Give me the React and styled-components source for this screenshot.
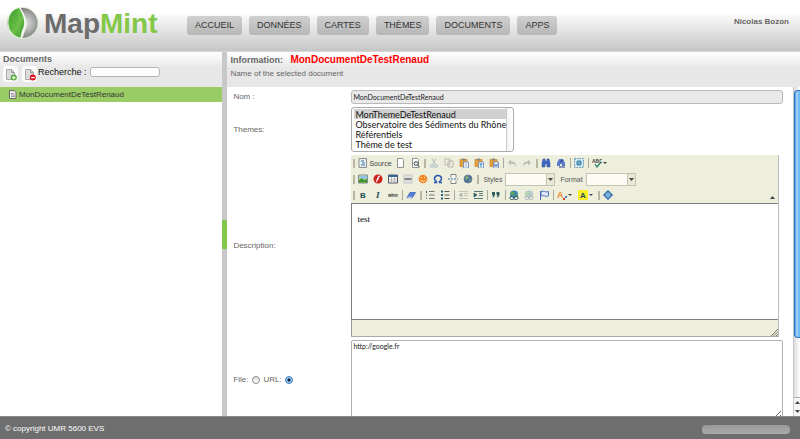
import React from "react";
import styled, { createGlobalStyle } from "styled-components";

const Global = createGlobalStyle`
  * { box-sizing: border-box; }
  body { margin: 0; font-family: "Liberation Sans", Arial, sans-serif; font-size: 8px; color: #666; background: #fff; }
  button, input, select, textarea { font-family: inherit; margin: 0; }
`;

const uiFont = `Lato, "Open Sans", sans-serif`;

const Page = styled.div`
  display: flex;
  flex-direction: column;
  height: 100vh;
  overflow: hidden;
`;
const Header = styled.header`
  display: flex;
  flex: none;
  align-items: flex-start;
  height: 52px;
  padding: 0 11px 0 6px;
  border-bottom: 1px solid #d6d6d6;
  background: linear-gradient(#fff 12px, #f2f2f2 20px, #c6c6c6);
`;
const Brand = styled.h1`
  display: flex;
  align-items: flex-start;
  gap: 5px;
  width: 181px;
  margin: 0;
  padding-top: 6px;
  font-size: 28px;
  line-height: 36px;
  color: #6c6c6c;
  svg { flex: none; }
`;
const Mint = styled.span`
  color: #84c84a;
`;
const Nav = styled.nav`
  display: flex;
  gap: 7px;
  flex: 1;
  padding-top: 16px;
`;
const NavButton = styled.button`
  height: 19px;
  padding: 0 8px;
  border: 0;
  border-radius: 3px;
  background: linear-gradient(#d0d0d0, #b6b6b6);
  color: #333;
  font-size: 9px;
  line-height: 19px;
`;
const User = styled.span`
  padding-top: 16px;
  font-weight: bold;
  line-height: 11px;
`;
const Main = styled.main`
  display: flex;
  flex: 1;
  min-height: 0;
`;
const Sidebar = styled.aside`
  flex: none;
  width: 27.8%;
  min-width: 180px;
`;
const PanelHead = styled.div`
  height: 35px;
  padding: 2px 3px 0;
  background: linear-gradient(#fff, #e7e7e7 16px);
`;
const Title = styled.h2`
  margin: 0;
  font-size: 9px;
  line-height: 11px;
`;
const DocName = styled.span`
  margin-left: 5px;
  font-size: 10px;
  color: #f00;
`;
const Subtitle = styled.p`
  margin: 3px 0 0;
  line-height: 9px;
`;
const Tools = styled.div`
  display: flex;
  align-items: flex-start;
  padding-top: 1px;
`;
const ToolButton = styled.button`
  display: flex;
  align-items: center;
  justify-content: center;
  width: 15px;
  height: 16px;
  margin-right: 4px;
  padding: 0;
  border: 0;
  border-radius: 3px;
  background: #fbfbfb;
  &:nth-of-type(2) { margin-right: 1px; }
`;
const SearchLabel = styled.label`
  display: flex;
  align-items: center;
  gap: 3px;
  color: #111;
  font-size: 9px;
  line-height: 12px;
`;
const Search = styled.input`
  width: 70px;
  height: 10px;
  padding: 0 2px;
  border: 1px solid #b4b4b4;
  border-radius: 3px;
  background: #fff;
  font-size: 8px;
`;
const DocList = styled.ul`
  margin: 0;
  padding: 0;
  list-style: none;
`;
const DocItem = styled.li`
  display: flex;
  align-items: center;
  gap: 2px;
  height: 15px;
  padding-left: 9px;
  background: #9acc66;
  color: #333;
`;
const Splitter = styled.div`
  display: flex;
  align-items: center;
  flex: none;
  width: 5px;
  background: #c8c8c8;
  &::after { content: ""; width: 5px; height: 29px; background: #84c84a; }
`;
const Content = styled.section`
  display: flex;
  flex-direction: column;
  flex: 1;
  min-width: 0;
`;
const Body = styled.div`
  display: flex;
  flex: 1;
  min-height: 0;
`;
const Form = styled.form`
  display: grid;
  grid-template-columns: 118px minmax(0, 1fr);
  grid-template-rows: 14px 45px 182px 80px;
  row-gap: 3px;
  flex: 1;
  align-items: center;
  overflow: hidden;
  padding: 3px 10px 0 6px;
`;
const Label = styled.label`
  line-height: 10px;
`;
const NameInput = styled.input`
  width: 100%;
  height: 14px;
  padding: 0 1px;
  border: 1px solid #b8b8b8;
  border-radius: 3px;
  background: #e9e9e9;
  font: 7px/12px ${uiFont};
  color: #222;
`;
const ThemeList = styled.select`
  justify-self: start;
  align-self: stretch;
  width: 163px;
  padding: 1px 6px 0 2px;
  border: 1px solid #aaa;
  border-radius: 3px;
  background: linear-gradient(90deg, #ccc 1px, #f4f4f4 1px, #fff) right / 7px 100% no-repeat, #fff;
  color: #111;
  font: 9px/10px ${uiFont};
  overflow: hidden;
  option { display: block; height: 10px; min-height: 10px; padding: 0 1px; line-height: 10px; color: #111; }
  option:checked { background: #d0d0d0 linear-gradient(#d0d0d0, #d0d0d0); color: #111; }
`;
const Editor = styled.div`
  display: flex;
  flex-direction: column;
  align-self: stretch;
  margin-right: 4px;
  border-right: 1px solid #bbb;
  border-bottom: 1px solid #aaa;
`;
const Toolbar = styled.div`
  display: flex;
  flex-direction: column;
  height: 48px;
  background: #eeeedd;
  position: relative;
`;
const ToolRow = styled.div`
  display: flex;
  align-items: center;
  height: 16px;
  padding-left: 1px;
  color: #555;
  font-size: 7px;
`;
const Grip = styled.span`
  flex: none;
  width: 2px;
  height: 9px;
  margin: 0 1px;
  background: #b9b6a2;
`;
const Bar = styled.span`
  flex: none;
  width: 1px;
  height: 10px;
  margin: 0 1px;
  background: #aaa99b;
`;
const Action = styled.button`
  display: flex;
  align-items: center;
  flex: none;
  gap: 1px;
  width: ${(p) => (p.$size === "text" ? "37px" : p.$size === "menu" ? "21px" : "15px")};
  height: 14px;
  padding: 0 2px;
  border: 0;
  background: none;
  color: #444;
  font-size: 7px;
  opacity: ${(p) => (p.$off ? 0.35 : 1)};
  svg { flex: none; }
`;
const Combo = styled.label`
  display: flex;
  align-items: center;
  gap: 3px;
  margin: 0 2px 0 3px;
`;
const ComboBox = styled.span`
  display: flex;
  width: 50px;
  height: 13px;
  border: 1px solid #c5c4b3;
  background: #e8e8d6;
  svg { margin: 3px 1px 0; flex: none; }
`;
const ComboSelect = styled.select`
  appearance: none;
  flex: 1;
  min-width: 0;
  border: 0;
  border-right: 1px solid #c5c4b3;
  border-radius: 0;
  background: #fcfcf5;
  font-size: 7px;
`;
const Collapse = styled.button`
  position: absolute;
  right: 1px;
  bottom: 1px;
  display: flex;
  padding: 2px;
  border: 0;
  background: none;
`;
const Writing = styled.div`
  flex: 1;
  padding: 10px 5px;
  border: solid #7f7f7f;
  border-width: 1px 0 1px 1px;
  background: #fff;
  color: #000;
  font: 9px/11px "Liberation Serif", serif;
`;
const EditorFoot = styled.div`
  display: flex;
  align-items: flex-end;
  justify-content: flex-end;
  height: 16px;
  border-left: 1px solid #999;
  background: #eeeedd;
`;
const UrlArea = styled.textarea`
  align-self: stretch;
  width: 100%;
  padding: 1px;
  border: 1px solid #b0b0b0;
  border-radius: 2px;
  color: #222;
  font: 7px/9px ${uiFont};
  resize: vertical;
`;
const Choices = styled.div`
  display: flex;
  align-items: center;
  gap: 4px;
  label { display: flex; align-items: center; gap: 3px; line-height: 10px; }
`;
const Radio = styled.input`
  appearance: none;
  width: 8px;
  height: 8px;
  border: 1px solid #888;
  border-radius: 50%;
  background: linear-gradient(#ddd, #fff);
  &:checked { border-color: #4278b4; background: radial-gradient(#123 1px, #8cc6f5 2px, #bfe4ff); }
`;
const Track = styled.div`
  display: flex;
  flex-direction: column;
  flex: none;
  width: 7px;
  border-left: 1px solid #c8c8c8;
  background: linear-gradient(90deg, #ddd, #fff);
`;
const Thumb = styled.div`
  flex: 1;
  margin: 3px 0 59px;
  border: 1px solid #2b6fc0;
  border-right: 0;
  border-radius: 4px 0 0 4px;
  background: linear-gradient(90deg, #4a9be8, #b3dcfb 2px, #58aef2 4px, #8fd0fb);
`;
const Arrows = styled.div`
  display: flex;
  flex-direction: column;
  height: 19px;
  border-top: 1px solid #aaa;
  background: #f5f5f5;
  svg { margin: 2px 1px; }
`;
const Footer = styled.footer`
  display: flex;
  flex: none;
  align-items: center;
  justify-content: space-between;
  height: 23px;
  padding: 0 10px 0 5px;
  border-top: 1px solid #888;
  background: #6e6e6e;
  color: #fff;
`;
const Progress = styled.div`
  width: 88px;
  height: 9px;
  margin-top: 2px;
  border-radius: 4px;
  background: linear-gradient(#999, #aaa);
`;

const Logo = () => (
  <svg width="33" height="34" viewBox="0 0 33 34" aria-hidden="true">
    <defs>
      <radialGradient id="silver" cx=".6" cy=".5" r=".6">
        <stop offset="0" stopColor="#ddd" />
        <stop offset=".5" stopColor="#aaa" />
        <stop offset="1" stopColor="#666" />
      </radialGradient>
      <linearGradient id="leaf" x1="0" x2="1" y1="0" y2="1">
        <stop offset="0" stopColor="#3b9a2e" />
        <stop offset=".6" stopColor="#6abf47" />
        <stop offset="1" stopColor="#2f8a27" />
      </linearGradient>
    </defs>
    <circle cx="16.5" cy="17" r="16" fill="#d9ecd0" />
    <circle cx="16.5" cy="17" r="15" fill="url(#silver)" />
    <path d="M14 1C5 3 1 10 1.500 18c.5 8 6 14 14 14.500 2-.5 2-5 4-9C23 16 19 9 14 1z" fill="#eef6ea" />
    <path d="M13 2C5 4 2 11 2.500 18c.5 7 5 12.500 12 13.500.5-4 1-6 2.500-9C20 15 17 9 13 2z" fill="url(#leaf)" />
    <path d="M12 3c2 9 2 18 1 27M5 10l7 7M4 17l8 6M16 11l-3 6" fill="none" stroke="#7cc45a" strokeWidth=".5" />
  </svg>
);

const PageIcon = ({ badge }) => (
  <svg width={badge ? 12 : 8} height={badge ? 13 : 9} viewBox={badge ? "0 0 12 13" : "0 0 8 9"} aria-hidden="true">
    {badge ? (
      <>
        <path d="M1.500 1.500h5l3 3v7h-8z" fill="#dcdcdc" stroke="#aaa" />
        <path d="M6.500 1.500v3h3" fill="none" stroke="#999" />
        <circle cx="8.800" cy="9.600" r="3" fill={badge === "add" ? "#48a928" : "#e01020"} />
        <path d={badge === "add" ? "M7 9.600h3.600M8.800 7.800v3.600" : "M7 9.600h3.600"} stroke="#fff" strokeWidth="1.200" />
      </>
    ) : (
      <>
        <path d="M.5.5h4.500l2 2v6H.5z" fill="#eee" stroke="#666" />
        <path d="M2 3.500h3M2 5h4M2 6.500h4" stroke="#777" strokeWidth=".7" />
      </>
    )}
  </svg>
);

const sheet = <path d="M2.500.5h5l1 1v8h-6z" fill="#fff" stroke="#777" strokeWidth=".8" />;
const board = (
  <>
    <path d="M1 1.500h7v7H1z" fill="#e9a13b" stroke="#b87620" strokeWidth=".6" />
    <path d="M3 .5h3v2H3z" fill="#888" />
    <path d="M4.500 4h5v6h-5z" fill="#fff" stroke="#4f77b5" strokeWidth=".7" />
  </>
);
const chain = (
  <>
    <circle cx="5" cy="4.500" r="4" fill="#3b83b8" />
    <path d="M3 1.500l3 1-2 3-3-1zM6 5l3-1-1 4z" fill="#60a851" />
    <path d="M1 8.500a1.500 1.500 0 0 1 3-1h2a1.500 1.500 0 0 1 3 1c-1 1.500-2 1-3 .5H4c-1 .6-2 1-3-.5z" fill="#eef" stroke="#234a4a" />
  </>
);
const glyphs = {
  source: <><path d="M1 .5h7.500v9H1z" fill="#e6eef2" stroke="#777" strokeWidth=".8" /><path d="M3 3h3M4 5h3M3 7h4" stroke="#4778ad" /></>,
  page: sheet,
  preview: <>{sheet}<circle cx="6" cy="5.500" r="2" fill="#cfe5f5" stroke="#555" /><path d="M7.500 7L10 9.500" stroke="#555" /></>,
  cut: <><path d="M3.500 6.500L7 .5M6.500 6.500L3 .5" stroke="#567" /><circle cx="2.800" cy="8" r="1.500" fill="none" stroke="#36a" /><circle cx="7" cy="8" r="1.500" fill="none" stroke="#36a" /></>,
  copy: <path d="M1 1h5v6H1zM4 3h5v6H4z" fill="#fff" stroke="#555" />,
  paste: <>{board}<path d="M5.500 6h3M5.500 8h3" stroke="#68a" strokeWidth=".7" /></>,
  pasteText: <>{board}<path d="M5.500 6h3M7 6v3" stroke="#157db5" /></>,
  pasteWord: <>{board}<path d="M5.500 5.500L6 8.500l1-2 1 2 .5-3" fill="none" stroke="#2551a0" strokeWidth=".7" /></>,
  undo: <path d="M4 1.500L1 4.500l3 3v-2c3 0 4 1 5 3 0-4-2-5-5-5z" fill="#566" />,
  redo: <path d="M6 1.500l3 3-3 3v-2c-3 0-4 1-5 3 0-4 2-5 5-5z" fill="#566" />,
  find: <path d="M2 1h2v2h2V1h2l1 4v4H6V6H4v3H1V5z" fill="#3f68c5" stroke="#2a4794" strokeWidth=".5" />,
  replace: <><path d="M3 1h4l2 4v3H6V6H4v2H1V5z" fill="#5a78c9" /><path d="M4 4l3-2M3 9h6" stroke="#223d8d" /></>,
  all: <><rect x=".7" y=".7" width="8.600" height="8.600" fill="#eaf4fc" stroke="#357ca5" strokeDasharray="1.500 1" /><path d="M3 3h4v4H3z" fill="#6babd0" stroke="#357ca5" /></>,
  spell: <><text x="0" y="5" fontSize="5" fontWeight="bold" fill="#444">ABC</text><path d="M3 6l2 3 4-5" fill="none" stroke="#2d8066" strokeWidth="1.300" /></>,
  image: <><path d="M.5 1h9v8h-9z" fill="#f3d65c" stroke="#678" strokeWidth=".8" /><path d="M1 1.500h8v3l-4 1-4-2z" fill="#8fc8ea" /><path d="M1 8.500V6l3-2 2 2 3-1v3.500z" fill="#3a9a35" /></>,
  flash: <><circle cx="5" cy="5" r="4.500" fill="#c9251f" /><path d="M7 2C4 2 5 7 3 8M4.500 5H6" fill="none" stroke="#fff" strokeWidth="1.200" /></>,
  table: <><path d="M.5 1h9v8h-9z" fill="#fff" stroke="#556" /><path d="M.5 2h9" stroke="#36659d" strokeWidth="2" /><path d="M3.500 3v6M6.500 3v6M1 5h8M1 7h8" stroke="#999" strokeWidth=".6" /></>,
  rule: <><path d="M1 1h8v8H1z" fill="#e2e2e2" stroke="#c5c5c5" /><path d="M1.500 5h7" stroke="#666" strokeWidth="1.500" /></>,
  smile: <><circle cx="5" cy="5" r="4.300" fill="#f28424" /><path d="M3 3.500h1M6 3.500h1M2.500 5.500c1 2.500 4 2.500 5 0" fill="none" stroke="#fff3c4" /></>,
  omega: <path d="M1 8.500h2.500v-1C0 5.500 1.500 1.500 5 1.500s5 4 1.500 6v1H9" fill="none" stroke="#2554b5" strokeWidth="1.400" />,
  split: <><path d="M3 3.500v-3h5v3M3 6.500v3h5v-3" fill="#fff" stroke="#666" strokeWidth=".8" /><path d="M0 5h10" stroke="#37759f" strokeDasharray="2 1" /></>,
  globe: <><circle cx="5" cy="5" r="4" fill="#4971a2" stroke="#6f8191" /><path d="M2 3l3-1 1 2-3 2zM6 6l2-1-1 3z" fill="#84ad70" /></>,
  eraser: <><path d="M4 2.500h5.500l-3 5H1z" fill="#5382dd" stroke="#3259ac" strokeWidth=".7" /><path d="M1.500 6.500h5l-.5 1.500H1z" fill="#dce8fb" stroke="#3259ac" strokeWidth=".4" /></>,
  ol: <><path d="M1.500 1v2M1 5h1M1 8h1" stroke="#357" /><path d="M4 1.500h5.500M4 5h5.500M4 8.500h5.500" stroke="#666" strokeWidth=".9" /></>,
  ul: <><path d="M1 1.500h2M1 5h2M1 8.500h2" stroke="#275b75" strokeWidth="2" /><path d="M4.500 1.500h5M4.500 5h5M4.500 8.500h5" stroke="#555" /></>,
  outdent: <path d="M1 1.500h9M6 3.500h4M6 5.500h4M1 8.500h9M4 3L1 5l3 2z" fill="#357" stroke="#555" strokeWidth=".8" />,
  indent: <path d="M1 1.500h9M6 3.500h4M6 5.500h4M1 8.500h9M1 3l3 2-3 2z" fill="#1f6b75" stroke="#355c60" strokeWidth=".8" />,
  quote: <path d="M1 2h3v3L2.500 7.500H1.500L2 5H1zM5.500 2h3v3L7 7.500H6L6.500 5h-1z" fill="#315a60" />,
  link: chain,
  unlink: chain,
  anchor: <><path d="M1.500 1v9" stroke="#4c6ab0" /><path d="M2 1.500c3-1.500 4 1.500 7.500 0v4.500C6 7.500 5 4.500 2 6z" fill="#dfe6fa" stroke="#4668b8" strokeWidth=".9" /></>,
  max: <><path d="M5 0l2 2H3zM5 10l2-2H3zM0 5l2-2v4zM10 5L8 3v4z" fill="#2766a5" /><circle cx="5" cy="5" r="3.200" fill="#79aeda" stroke="#3574ab" /></>,
  bold: <text x="2" y="8" fontSize="8" fontWeight="bold" fill="#225058">B</text>,
  italic: <text x="3" y="8" fontSize="9" fontWeight="bold" fontStyle="italic" fontFamily="Liberation Serif" fill="#225058">I</text>,
  strike: <><text x="0" y="7" fontSize="6" fill="#444">abc</text><path d="M0 5h10" stroke="#444" strokeWidth=".7" /></>,
  color: <><text x="0" y="8" fontSize="9" fontWeight="bold" fill="#e68a2e">A</text><path d="M8 6h2v2H8z" fill="#467cc5" /><path d="M6 8h2v2H6z" fill="#d43c2e" /></>,
  fill: <><path d="M0 0h10v10H0z" fill="#f8ee25" /><text x="2" y="8" fontSize="8" fontWeight="bold" fill="#225058">A</text></>,
};

const Icon = ({ name }) => (
  <svg width="10" height="10" viewBox="0 0 10 10" aria-hidden="true">{glyphs[name]}</svg>
);
const Arrow = ({ up }) => (
  <svg width="5" height="5" viewBox="0 0 5 5" aria-hidden="true">
    <path d={up ? "M0 4h5L2.500 1z" : "M0 1h5L2.500 4z"} fill="#444" />
  </svg>
);
const Tool = ({ name, label, off, menu, text }) => (
  <Action type="button" aria-label={label || name} $off={off} $size={text ? "text" : menu ? "menu" : "icon"}>
    <Icon name={name} />
    {text}
    {menu && <svg width="4" height="4" viewBox="0 0 4 4"><path d="M0 1h4L2 3z" fill="#444" /></svg>}
  </Action>
);
const StyleCombo = ({ label }) => (
  <Combo>
    {label}
    <ComboBox>
      <ComboSelect><option value="" /></ComboSelect>
      <Arrow />
    </ComboBox>
  </Combo>
);

const sections = ["ACCUEIL", "DONNÉES", "CARTES", "THÈMES", "DOCUMENTS", "APPS"];
const themes = ["MonThemeDeTestRenaud", "Observatoire des Sédiments du Rhône", "Référentiels", "Thème de test"];

export default function App() {
  return (
    <Page>
      <Global />
      <Header>
        <Brand><Logo /><span>Map<Mint>Mint</Mint></span></Brand>
        <Nav>{sections.map((s) => <NavButton key={s}>{s}</NavButton>)}</Nav>
        <User>Nicolas Bozon</User>
      </Header>
      <Main>
        <Sidebar>
          <PanelHead>
            <Title>Documents</Title>
            <Tools>
              <ToolButton aria-label="Add"><PageIcon badge="add" /></ToolButton>
              <ToolButton aria-label="Remove"><PageIcon badge="remove" /></ToolButton>
              <SearchLabel>Recherche : <Search /></SearchLabel>
            </Tools>
          </PanelHead>
          <DocList>
            <DocItem><PageIcon />MonDocumentDeTestRenaud</DocItem>
          </DocList>
        </Sidebar>
        <Splitter />
        <Content>
          <PanelHead>
            <Title>Information: <DocName>MonDocumentDeTestRenaud</DocName></Title>
            <Subtitle>Name of the selected document</Subtitle>
          </PanelHead>
          <Body>
            <Form>
              <Label htmlFor="name">Nom :</Label>
              <NameInput id="name" defaultValue="MonDocumentDeTestRenaud" />
              <Label htmlFor="themes">Themes:</Label>
              <ThemeList id="themes" multiple size={4} defaultValue={[themes[0]]}>
                {themes.map((t) => <option key={t}>{t}</option>)}
              </ThemeList>
              <Label as="span" id="description">Description:</Label>
              <Editor>
                <Toolbar>
                  <ToolRow>
                    <Grip /><Tool name="source" text="Source" /><Tool name="page" /><Tool name="preview" />
                    <Grip /><Tool name="cut" off /><Tool name="copy" off /><Tool name="paste" /><Tool name="pasteText" /><Tool name="pasteWord" />
                    <Bar /><Tool name="undo" off /><Tool name="redo" off />
                    <Grip /><Tool name="find" /><Tool name="replace" /><Bar /><Tool name="all" /><Bar /><Tool name="spell" menu />
                  </ToolRow>
                  <ToolRow>
                    <Grip /><Tool name="image" /><Tool name="flash" /><Tool name="table" /><Tool name="rule" />
                    <Tool name="smile" /><Tool name="omega" /><Tool name="split" /><Tool name="globe" />
                    <Grip /><StyleCombo label="Styles" /><StyleCombo label="Format" />
                  </ToolRow>
                  <ToolRow>
                    <Grip /><Tool name="bold" /><Tool name="italic" /><Tool name="strike" />
                    <Bar /><Tool name="eraser" /><Grip /><Tool name="ol" /><Tool name="ul" />
                    <Bar /><Tool name="outdent" off /><Tool name="indent" /><Bar /><Tool name="quote" />
                    <Bar /><Tool name="link" /><Tool name="unlink" off /><Tool name="anchor" />
                    <Bar /><Tool name="color" menu /><Tool name="fill" menu /><Grip /><Tool name="max" />
                  </ToolRow>
                  <Collapse type="button" aria-label="Collapse"><Arrow up /></Collapse>
                </Toolbar>
                <Writing contentEditable suppressContentEditableWarning role="textbox" aria-labelledby="description">test</Writing>
                <EditorFoot>
                  <svg width="8" height="8" viewBox="0 0 8 8"><path d="M1 8l7-7M3.500 8L8 3.500M6 8l2-2" stroke="#77776a" /></svg>
                </EditorFoot>
              </Editor>
              <Choices>
                <label>File: <Radio type="radio" name="kind" /></label>
                <label>URL: <Radio type="radio" name="kind" defaultChecked /></label>
              </Choices>
              <UrlArea aria-label="URL" defaultValue="http://google.fr" />
            </Form>
            <Track>
              <Thumb />
              <Arrows><Arrow up /><Arrow /></Arrows>
            </Track>
          </Body>
        </Content>
      </Main>
      <Footer>
        <span>© copyright UMR 5600 EVS</span>
        <Progress />
      </Footer>
    </Page>
  );
}
